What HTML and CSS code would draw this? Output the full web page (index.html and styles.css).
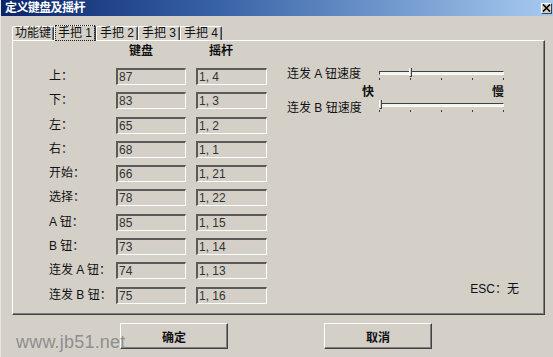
FILE: index.html
```html
<!DOCTYPE html>
<html lang="zh-CN">

<head>
    <meta charset="UTF-8" />
    <title>定义键盘及摇杆</title>
    <link rel="stylesheet" href="styles.css">
</head>

<body>
    <div class="window">
        <div class="titlebar">
            <span class="title">定义键盘及摇杆</span>
            <span class="close">
                <svg width="9" height="8" viewBox="0 0 9 8">
                    <path d="M1 0.5 L8 7.5 M8 0.5 L1 7.5" stroke="#000" stroke-width="1.6" />
                </svg>
            </span>
        </div>

        <div class="tabs">
            <div class="tab">功能键</div>
            <div class="tab active"><span class="focus">手把 1</span></div>
            <div class="tab">手把 2</div>
            <div class="tab">手把 3</div>
            <div class="tab">手把 4</div>
        </div>

        <div class="panel">
            <div class="keys">
                <div></div>
                <div class="head">键盘</div>
                <div class="head">摇杆</div>

                <div class="label">上：</div><div class="field">87</div><div class="field">1, 4</div>
                <div class="label">下：</div><div class="field">83</div><div class="field">1, 3</div>
                <div class="label">左：</div><div class="field">65</div><div class="field">1, 2</div>
                <div class="label">右：</div><div class="field">68</div><div class="field">1, 1</div>
                <div class="label">开始：</div><div class="field">66</div><div class="field">1, 21</div>
                <div class="label">选择：</div><div class="field">78</div><div class="field">1, 22</div>
                <div class="label">A 钮：</div><div class="field">85</div><div class="field">1, 15</div>
                <div class="label">B 钮：</div><div class="field">73</div><div class="field">1, 14</div>
                <div class="label">连发 A 钮：</div><div class="field">74</div><div class="field">1, 13</div>
                <div class="label">连发 B 钮：</div><div class="field">75</div><div class="field">1, 16</div>
            </div>

            <div class="speeds">
                <div class="speed-row">
                    <div class="speed-label">连发 A 钮速度</div>
                    <div class="slider">
                        <div class="track"></div>
                        <div class="thumb" style="left: 30px"></div>
                        <div class="ticks"><i></i><i></i><i></i><i></i><i></i></div>
                    </div>
                </div>
                <div class="scale"><span>快</span><span>慢</span></div>
                <div class="speed-row second">
                    <div class="speed-label">连发 B 钮速度</div>
                    <div class="slider">
                        <div class="track"></div>
                        <div class="thumb" style="left: 0px"></div>
                        <div class="ticks"><i></i><i></i><i></i><i></i><i></i></div>
                    </div>
                </div>
                <div class="esc">ESC：无</div>
            </div>
        </div>

        <div class="buttons">
            <button class="btn">确定</button>
            <button class="btn">取消</button>
        </div>

        <div class="watermark">www.jb51.net</div>
    </div>
</body>

</html>
```

FILE: styles.css
```css
* {
    margin: 0;
    padding: 0;
    box-sizing: border-box;
}

body {
    background-color: #d4d0c8;
    font-family: 'Liberation Sans', 'Noto Sans CJK SC', sans-serif;
    font-size: 12px;
    color: #111;
}

.window {
    position: relative;
    width: 553px;
    height: 357px;
    background-color: #d4d0c8;
    border-left: 1px solid #e8e6e0;
    overflow: hidden;
}

.titlebar {
    height: 16px;
    display: flex;
    align-items: center;
    justify-content: space-between;
    padding: 0 1px 0 4px;
    background: linear-gradient(to right, #0a246a, #3a64a8 40%, #a6caf0);
}

.title {
    color: #fff;
    font-weight: bold;
    font-size: 12px;
    letter-spacing: -0.6px;
    line-height: 16px;
}

.close {
    width: 11px;
    height: 11px;
    display: flex;
    align-items: center;
    justify-content: center;
    background-color: #d4d0c8;
    border: 1px solid;
    border-color: #fff #404040 #404040 #fff;
}

/* tabs */
.tabs {
    display: flex;
    align-items: flex-end;
    height: 16px;
    margin-top: 8px;
    padding-left: 11px;
}

.tab {
    width: 42px;
    height: 14px;
    line-height: 12px;
    text-align: center;
    border: 1px solid;
    border-bottom: none;
    border-color: #fff #404040 #fff #fff;
    border-radius: 2px 2px 0 0;
    box-shadow: inset -1px 0 #808080;
    white-space: nowrap;
}

.tab.active {
    height: 16px;
    line-height: 14px;
    position: relative;
    z-index: 1;
    background-color: #d4d0c8;
    margin-bottom: -1px;
}

.focus {
    outline: 1px dotted #222;
    padding: 0 2px;
}

/* panel */
.panel {
    display: flex;
    margin-left: 11px;
    width: 533px;
    height: 275px;
    padding: 3px 25px 0 36px;
    border: 1px solid;
    border-color: #fff #404040 #404040 #fff;
    box-shadow: inset -1px -1px #808080;
}

.keys {
    display: grid;
    grid-template-columns: 57px 70px 71px;
    grid-template-rows: 16.7px;
    grid-auto-rows: 17px;
    column-gap: 10px;
    row-gap: 7.3px;
    align-content: start;
}

.head {
    padding-left: 13px;
    line-height: 14px;
    font-weight: bold;
}

.label {
    line-height: 17px;
    white-space: nowrap;
}

.field {
    height: 17px;
    line-height: 14px;
    padding-left: 1px;
    border-top: 2px solid #5a5a5a;
    border-left: 2px solid #5a5a5a;
    border-right: 1px solid #fff;
    border-bottom: 1px solid #fff;
    color: #333;
    white-space: nowrap;
}

/* speed sliders */
.speeds {
    flex-grow: 1;
    display: flex;
    flex-direction: column;
    margin-left: 20px;
    padding-top: 22px;
}

.speed-row {
    display: flex;
    height: 20px;
}

.speed-row.second {
    margin-top: 0;
}

.speed-row.second .speed-label {
    margin-top: 2px;
}

.speed-label {
    width: 92px;
    line-height: 16px;
    white-space: nowrap;
}

.slider {
    position: relative;
    width: 125px;
}

.track {
    height: 4px;
    margin-top: 5px;
    border: 1px solid;
    border-color: #404040 #fff #fff #404040;
    background-color: #f4f3ef;
}

.thumb {
    position: absolute;
    top: 2px;
    width: 3px;
    height: 9px;
    background-color: #d4d0c8;
    border-left: 1px solid #fff;
    border-right: 1px solid #404040;
    border-bottom: 1px solid #404040;
}

.ticks {
    display: flex;
    justify-content: space-between;
    margin-top: 3px;
}

.ticks i {
    display: block;
    width: 1px;
    height: 2px;
    background-color: #404040;
}

.scale {
    display: flex;
    justify-content: space-between;
    width: 142px;
    margin-left: 75px;
    height: 12px;
    line-height: 12px;
    font-weight: bold;
}

.esc {
    margin-top: auto;
    margin-bottom: 18px;
    align-self: flex-end;
    line-height: 14px;
}

/* buttons */
.buttons {
    display: flex;
    gap: 96px;
    margin-top: 8px;
    padding-left: 119px;
}

.btn {
    width: 108px;
    height: 26px;
    font-family: 'Liberation Sans', 'Noto Sans CJK SC', sans-serif;
    font-size: 12px;
    font-weight: bold;
    color: #111;
    background-color: #d4d0c8;
    border: 1px solid;
    border-color: #fff #404040 #404040 #fff;
    box-shadow: inset -1px -1px #808080;
    cursor: pointer;
}

.watermark {
    position: absolute;
    left: 15px;
    top: 332px;
    font-family: 'Liberation Sans', sans-serif;
    font-size: 18px;
    color: #8e8e8e;
    letter-spacing: 0.2px;
}
```
